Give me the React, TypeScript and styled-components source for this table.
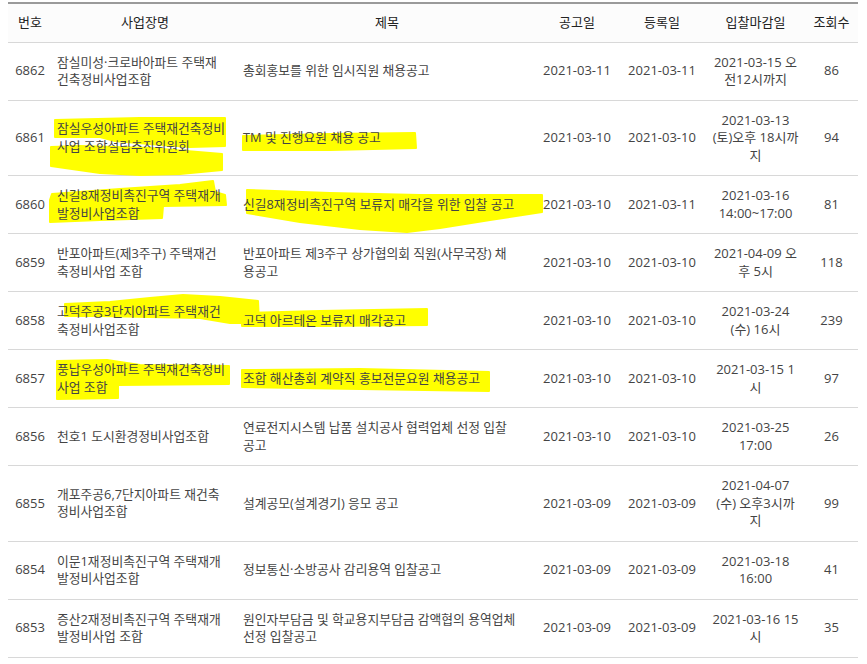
import React from "react";
import styled, { createGlobalStyle } from "styled-components";

const GlobalStyle = createGlobalStyle`
  html, body { margin: 0; padding: 0; background: #fff; }
  body { font-family: "Open Sans", "Noto Sans CJK KR", sans-serif; }
`;

const Page = styled.div`
  padding: 2px 9px 0 8px;
`;

const Table = styled.table`
  width: 850px;
  border-collapse: separate;
  border-spacing: 0;
  table-layout: fixed;
  border-top: 2px solid #9a9a9a;
  color: #444;
`;

const Col = styled.col<{ $w: number }>`
  width: ${(p) => p.$w}px;
`;

const Th = styled.th`
  font-weight: normal;
  font-size: 13px;
  line-height: 17.5px;
  color: #222;
  padding: 10px 5px;
  text-align: center;
  background: #fcfcfc;
  border-bottom: 1px solid #d8d8d8;
  white-space: nowrap;
`;

const Td = styled.td<{ $align?: "left" | "center"; $size?: number }>`
  position: relative;
  padding: 11px 5px;
  font-size: ${(p) => p.$size ?? 13}px;
  line-height: 17.5px;
  text-align: ${(p) => p.$align ?? "center"};
  vertical-align: middle;
  border-bottom: 1px solid #d8d8d8;
  white-space: nowrap;
`;

const Mark = styled.svg`
  position: absolute;
  left: 0;
  top: 0;
  width: 100%;
  height: 100%;
  overflow: visible;
  pointer-events: none;
  z-index: 0;
`;

const CellText = styled.span`
  position: relative;
  z-index: 1;
`;

type Pts = number[][];

const rel = (pts: Pts, ox: number, oy: number) =>
  pts.map(([x, y]) => `${x - ox},${y - oy}`).join(" ");

const SITE_X = 52;
const TITLE_X = 238;

type Row = {
  no: string;
  site: string[];
  title: string[];
  posted: string;
  reg: string;
  deadline: string[];
  views: string;
  siteMarks?: string[];
  titleMarks?: string[];
};

const rows: Row[] = [
  {
    no: "6862",
    site: ["잠실미성·크로바아파트 주택재", "건축정비사업조합"],
    title: ["총회홍보를 위한 임시직원 채용공고"],
    posted: "2021-03-11",
    reg: "2021-03-11",
    deadline: ["2021-03-15 오", "전12시까지"],
    views: "86",
  },
  {
    no: "6861",
    site: ["잠실우성아파트 주택재건축정비", "사업 조합설립추진위원회"],
    title: ["TM 및 진행요원 채용 공고"],
    posted: "2021-03-10",
    reg: "2021-03-10",
    deadline: ["2021-03-13", "(토)오후 18시까", "지"],
    views: "94",
    siteMarks: [
      rel(
        [[55, 120], [140, 118], [225, 118], [225, 146], [190, 147], [150, 144], [115, 141], [100, 137], [55, 137]],
        SITE_X,
        101
      ),
      rel(
        [[51, 147], [80, 146], [150, 148], [222, 154], [222, 170], [180, 174], [140, 175], [100, 173], [51, 166]],
        SITE_X,
        101
      ),
    ],
    titleMarks: [
      rel([[243, 136], [330, 134], [415, 133], [416, 148], [330, 150], [243, 150]], TITLE_X, 101),
    ],
  },
  {
    no: "6860",
    site: ["신길8재정비촉진구역 주택재개", "발정비사업조합"],
    title: ["신길8재정비촉진구역 보류지 매각을 위한 입찰 공고"],
    posted: "2021-03-10",
    reg: "2021-03-11",
    deadline: ["2021-03-16", "14:00~17:00"],
    views: "81",
    siteMarks: [
      rel(
        [[52, 194], [120, 189], [180, 185], [213, 181], [215, 192], [225, 195], [226, 205], [163, 206], [162, 218], [100, 220], [50, 222], [50, 200]],
        SITE_X,
        176
      ),
    ],
    titleMarks: [
      rel(
        [[247, 190], [330, 193], [420, 195], [542, 195], [542, 212], [490, 220], [440, 228], [407, 232], [360, 229], [300, 222], [247, 213]],
        TITLE_X,
        176
      ),
    ],
  },
  {
    no: "6859",
    site: ["반포아파트(제3주구) 주택재건", "축정비사업 조합"],
    title: ["반포아파트 제3주구 상가협의회 직원(사무국장) 채", "용공고"],
    posted: "2021-03-10",
    reg: "2021-03-10",
    deadline: ["2021-04-09 오", "후 5시"],
    views: "118",
  },
  {
    no: "6858",
    site: ["고덕주공3단지아파트 주택재건", "축정비사업조합"],
    title: ["고덕 아르테온 보류지 매각공고"],
    posted: "2021-03-10",
    reg: "2021-03-10",
    deadline: ["2021-03-24", "(수) 16시"],
    views: "239",
    siteMarks: [
      rel(
        [[65, 304], [110, 302], [150, 298], [183, 295], [220, 297], [258, 301], [259, 323], [230, 323], [200, 318], [150, 317], [100, 316], [65, 316]],
        SITE_X,
        292
      ),
    ],
    titleMarks: [
      rel([[242, 313], [320, 311], [427, 309], [427, 325], [320, 326], [242, 326]], TITLE_X, 292),
    ],
  },
  {
    no: "6857",
    site: ["풍납우성아파트 주택재건축정비", "사업 조합"],
    title: ["조합 해산총회 계약직 홍보전문요원 채용공고"],
    posted: "2021-03-10",
    reg: "2021-03-10",
    deadline: ["2021-03-15 1", "시"],
    views: "97",
    siteMarks: [
      rel(
        [[57, 362], [107, 361], [140, 366], [229, 367], [229, 385], [118, 386], [118, 399], [57, 400]],
        SITE_X,
        351
      ),
    ],
    titleMarks: [
      rel([[242, 371], [360, 370], [489, 373], [489, 392], [360, 390], [242, 388]], TITLE_X, 351),
    ],
  },
  {
    no: "6856",
    site: ["천호1 도시환경정비사업조합"],
    title: ["연료전지시스템 납품 설치공사 협력업체 선정 입찰", "공고"],
    posted: "2021-03-10",
    reg: "2021-03-10",
    deadline: ["2021-03-25", "17:00"],
    views: "26",
  },
  {
    no: "6855",
    site: ["개포주공6,7단지아파트 재건축", "정비사업조합"],
    title: ["설계공모(설계경기) 응모 공고"],
    posted: "2021-03-09",
    reg: "2021-03-09",
    deadline: ["2021-04-07", "(수) 오후3시까", "지"],
    views: "99",
  },
  {
    no: "6854",
    site: ["이문1재정비촉진구역 주택재개", "발정비사업조합"],
    title: ["정보통신·소방공사 감리용역 입찰공고"],
    posted: "2021-03-09",
    reg: "2021-03-09",
    deadline: ["2021-03-18", "16:00"],
    views: "41",
  },
  {
    no: "6853",
    site: ["증산2재정비촉진구역 주택재개", "발정비사업 조합"],
    title: ["원인자부담금 및 학교용지부담금 감액협의 용역업체", "선정 입찰공고"],
    posted: "2021-03-09",
    reg: "2021-03-09",
    deadline: ["2021-03-16 15", "시"],
    views: "35",
  },
];

const Lines: React.FC<{ lines: string[] }> = ({ lines }) => (
  <CellText>
    {lines.map((l, i) => (
      <React.Fragment key={i}>
        {i > 0 && <br />}
        {l}
      </React.Fragment>
    ))}
  </CellText>
);

const Highlight: React.FC<{ marks?: string[] }> = ({ marks }) =>
  marks && marks.length ? (
    <Mark aria-hidden="true">
      {marks.map((m, i) => (
        <polygon key={i} points={m} fill="#ffff00" stroke="#ffff00" strokeWidth={2} strokeLinejoin="round" />
      ))}
    </Mark>
  ) : null;

const widths = [44, 186, 298, 82, 88, 99, 53];
const heads = ["번호", "사업장명", "제목", "공고일", "등록일", "입찰마감일", "조회수"];

export default function App() {
  return (
    <>
      <GlobalStyle />
      <Page>
        <Table>
          <colgroup>
            {widths.map((w, i) => (
              <Col key={i} $w={w} />
            ))}
          </colgroup>
          <thead>
            <tr>
              {heads.map((h) => (
                <Th key={h}>{h}</Th>
              ))}
            </tr>
          </thead>
          <tbody>
            {rows.map((r) => (
              <tr key={r.no}>
                <Td>{r.no}</Td>
                <Td $align="left" $size={12.8}>
                  <Highlight marks={r.siteMarks} />
                  <Lines lines={r.site} />
                </Td>
                <Td $align="left" $size={12.8}>
                  <Highlight marks={r.titleMarks} />
                  <Lines lines={r.title} />
                </Td>
                <Td>{r.posted}</Td>
                <Td>{r.reg}</Td>
                <Td>
                  <Lines lines={r.deadline} />
                </Td>
                <Td>{r.views}</Td>
              </tr>
            ))}
          </tbody>
        </Table>
      </Page>
    </>
  );
}
